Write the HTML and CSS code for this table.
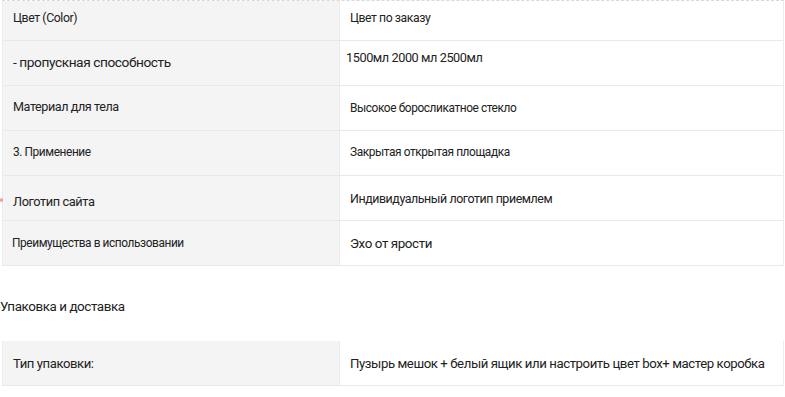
FILE: index.html
```html
<!DOCTYPE html>
<html lang="ru">
<head>
<meta charset="utf-8">
<link rel="stylesheet" href="styles.css">
</head>
<body>
<div class="spec spec-top">
  <div class="row r1">
    <div class="key"><span class="s123">Цвет (Color)</span></div>
    <div class="val"><span class="s122">Цвет по заказу</span></div>
  </div>
  <div class="row">
    <div class="key"><span class="s137 up1">- пропускная способность</span></div>
    <div class="val v-tight"><span class="s127 up6">1500мл 2000 мл 2500мл</span></div>
  </div>
  <div class="row">
    <div class="key"><span class="s126 up2">Материал для тела</span></div>
    <div class="val"><span class="s119">Высокое боросликатное стекло</span></div>
  </div>
  <div class="row">
    <div class="key"><span class="s119 up1">3. Применение</span></div>
    <div class="val"><span class="s119 up1">Закрытая открытая площадка</span></div>
  </div>
  <div class="row">
    <div class="key"><span class="s128 down3">Логотип сайта</span><i class="dot"></i></div>
    <div class="val"><span class="s124">Индивидуальный логотип приемлем</span></div>
  </div>
  <div class="row">
    <div class="key key-in"><span class="s119">Преимущества в использовании</span></div>
    <div class="val"><span class="s134">Эхо от ярости</span></div>
  </div>
</div>
<h3 class="section">Упаковка и доставка</h3>
<div class="spec">
  <div class="row">
    <div class="key"><span class="s131">Тип упаковки:</span></div>
    <div class="val"><span class="s132">Пузырь мешок + белый ящик или настроить цвет box+ мастер коробка</span></div>
  </div>
</div>
</body>
</html>
```
FILE: styles.css
```css
* { box-sizing: border-box; }
html, body { margin: 0; padding: 0; background: #fff; }
body {
  font-family: Roboto, "Liberation Sans", sans-serif;
  color: #222;
  letter-spacing: -0.42px;
  width: 785px;
  height: 397px;
  overflow: hidden;
}
.spec {
  margin-left: 2px;
  width: 782px;
  border-left: 1px solid #ececec;
  border-right: 1px solid #ececec;
}
.spec-top { border-top: 1px dashed #d8d8d8; }
.row {
  display: grid;
  grid-template-columns: 337px 1fr;
  height: 45px;
  border-bottom: 1px solid #e9e9e9;
}
.row.r1 { height: 40px; }
.key {
  position: relative;
  background: #f4f4f4;
  border-right: 1px solid #ececec;
  display: flex;
  align-items: center;
  padding-left: 10px;
}
.row.r1 .key, .row.r1 .val { padding-bottom: 6px; }
.key-in { padding-left: 9px; }
.val {
  display: flex;
  align-items: center;
  padding-left: 10px;
  white-space: nowrap;
}
.v-tight { padding-left: 6px; }
.s119 { font-size: 11.9px; }
.s122 { font-size: 12.2px; }
.s123 { font-size: 12.3px; }
.s124 { font-size: 12.4px; }
.s126 { font-size: 12.6px; }
.s127 { font-size: 12.7px; }
.s128 { font-size: 12.8px; }
.s131 { font-size: 13.1px; }
.s132 { font-size: 13.2px; }
.s134 { font-size: 13.4px; }
.s137 { font-size: 13.7px; }
.up6 { position: relative; top: -6px; }
.up2 { position: relative; top: -2px; }
.up1 { position: relative; top: -1px; }
.down3 { position: relative; top: 3px; }
.dot {
  position: absolute;
  left: -3px;
  top: 22px;
  width: 3px;
  height: 4px;
  background: #f0a0a0;
  border-radius: 2px;
}
.section {
  margin: 0;
  height: 75px;
  padding-top: 32px;
  font-size: 13.4px;
  font-weight: normal;
  line-height: 18px;
}
```
